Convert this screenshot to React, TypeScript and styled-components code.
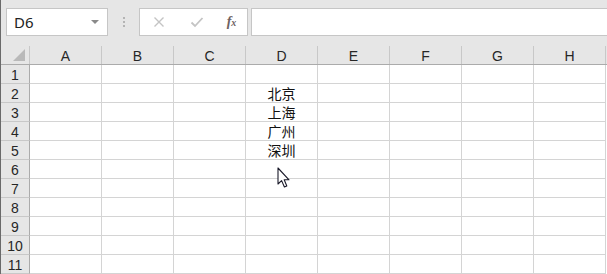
import React from "react";
import styled, { createGlobalStyle } from "styled-components";

const GlobalStyle = createGlobalStyle`
  html, body {
    margin: 0;
    padding: 0;
    background: #ffffff;
  }
  body {
    font-family: "Liberation Sans", Arial, sans-serif;
  }
`;

const COLS = ["A", "B", "C", "D", "E", "F", "G", "H"];
const ROWS = [1, 2, 3, 4, 5, 6, 7, 8, 9, 10, 11];

// cells that hold a value: row -> column -> text
const DATA: Record<number, Record<string, string>> = {
  2: { D: "北京" },
  3: { D: "上海" },
  4: { D: "广州" },
  5: { D: "深圳" },
};

function App() {
  return (
    <Window>
      <GlobalStyle />
      <Toolbar>
        <NameBox>
          <NameText>D6</NameText>
          <DropArrow />
        </NameBox>
        <Grip>
          <span />
          <span />
          <span />
        </Grip>
        <FxGroup>
          <FxButton>
            <svg width="12" height="12" viewBox="0 0 12 12">
              <path d="M1.5 1.5 L10.5 10.5 M10.5 1.5 L1.5 10.5" stroke="#c4c4c4" strokeWidth="1.4" fill="none" />
            </svg>
          </FxButton>
          <FxButton>
            <svg width="14" height="12" viewBox="0 0 14 12">
              <path d="M1.5 6.5 L5 10 L12.5 2" stroke="#c4c4c4" strokeWidth="1.8" fill="none" />
            </svg>
          </FxButton>
          <FxButton $narrow>
            <FxLabel>
              f<sub>x</sub>
            </FxLabel>
          </FxButton>
        </FxGroup>
        <FormulaInput />
      </Toolbar>

      <Sheet>
        <HeadRow>
          <Corner>
            <svg width="12" height="12" viewBox="0 0 12 12">
              <path d="M12 0 L12 12 L0 12 Z" fill="#b9b9b9" />
            </svg>
          </Corner>
          {COLS.map((c) => (
            <ColHead key={c}>{c}</ColHead>
          ))}
        </HeadRow>
        {ROWS.map((r) => (
          <Row key={r}>
            <RowHead>{r}</RowHead>
            {COLS.map((c) => (
              <Cell key={c}>{DATA[r]?.[c]}</Cell>
            ))}
          </Row>
        ))}

        <Cursor width="14" height="22" viewBox="0 0 14 22">
          <path
            d="M1 1 L1 17 L4.6 13.6 L7.4 20 L9.8 19 L7.2 12.8 L12 12.8 Z"
            fill="#ffffff"
            stroke="#1a1a2a"
            strokeWidth="1.1"
            strokeLinejoin="round"
          />
        </Cursor>
      </Sheet>
    </Window>
  );
}

export default App;

const Window = styled.div`
  width: 607px;
  height: 274px;
  overflow: hidden;
  border-left: 1px solid #6a6a6a;
  box-sizing: border-box;
  background: #e6e6e6;
`;

const Toolbar = styled.div`
  height: 46px;
  display: flex;
  align-items: flex-start;
  padding-top: 8px;
  padding-left: 5px;
  box-sizing: border-box;
  background: #e6e6e6;
`;

const NameBox = styled.div`
  width: 102px;
  height: 28px;
  box-sizing: border-box;
  background: #ffffff;
  border: 1px solid #c6c6c6;
  display: flex;
  align-items: center;
  justify-content: space-between;
  padding: 0 8px 0 7px;
`;

const NameText = styled.span`
  font-family: "Noto Sans", "Liberation Sans", sans-serif;
  font-size: 15px;
  color: #222222;
`;

const DropArrow = styled.span`
  width: 0;
  height: 0;
  border-left: 4px solid transparent;
  border-right: 4px solid transparent;
  border-top: 4px solid #8a8a8a;
`;

const Grip = styled.div`
  width: 31px;
  height: 28px;
  display: flex;
  flex-direction: column;
  align-items: center;
  justify-content: center;
  gap: 2px;

  span {
    width: 2px;
    height: 2px;
    background: #b4b4b4;
  }
`;

const FxGroup = styled.div`
  width: 109px;
  height: 28px;
  box-sizing: border-box;
  background: #ffffff;
  border: 1px solid #c6c6c6;
  display: flex;
  align-items: center;
`;

const FxButton = styled.div<{ $narrow?: boolean }>`
  width: ${(p) => (p.$narrow ? "31px" : "38px")};
  height: 100%;
  display: flex;
  align-items: center;
  justify-content: center;
`;

const FxLabel = styled.span`
  font-family: "Liberation Serif", "Times New Roman", serif;
  font-style: italic;
  font-weight: bold;
  font-size: 14px;
  color: #6e6262;

  sub {
    font-size: 10px;
    vertical-align: baseline;
  }
`;

const FormulaInput = styled.div`
  flex: 1;
  height: 28px;
  margin-left: 3px;
  box-sizing: border-box;
  background: #ffffff;
  border: 1px solid #c6c6c6;
  border-right: none;
`;

const Sheet = styled.div`
  position: relative;
  background: #ffffff;
`;

const HeadRow = styled.div`
  display: grid;
  grid-template-columns: 29px repeat(8, 72px);
  height: 19px;
  background: #e6e6e6;
  border-bottom: 1px solid #ababab;
  box-sizing: border-box;
`;

const Corner = styled.div`
  display: flex;
  align-items: flex-end;
  justify-content: flex-end;
  padding: 0 4px 3px 0;
  border-right: 1px solid #c8c8c8;
`;

const ColHead = styled.div`
  display: flex;
  align-items: center;
  justify-content: center;
  font-size: 14px;
  color: #262626;
  border-right: 1px solid #c8c8c8;
  padding-top: 2px;
`;

const Row = styled.div`
  display: grid;
  grid-template-columns: 29px repeat(8, 72px);
  height: 19px;
`;

const RowHead = styled.div`
  display: flex;
  align-items: center;
  justify-content: center;
  background: #e6e6e6;
  border-right: 1px solid #ababab;
  border-bottom: 1px solid #c8c8c8;
  font-size: 14px;
  color: #262626;
  padding-top: 1px;
`;

const Cell = styled.div`
  display: flex;
  align-items: center;
  justify-content: center;
  border-right: 1px solid #d4d4d4;
  border-bottom: 1px solid #d4d4d4;
  font-family: "Noto Sans CJK SC", "Noto Sans", sans-serif;
  font-size: 14px;
  color: #111111;
  overflow: hidden;
  white-space: nowrap;
`;

const Cursor = styled.svg`
  position: absolute;
  left: 276px;
  top: 121px;
`;
